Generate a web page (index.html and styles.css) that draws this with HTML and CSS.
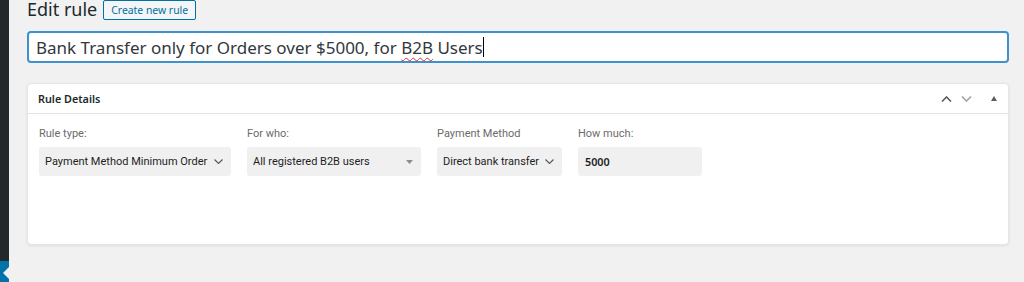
FILE: index.html
```html
<!DOCTYPE html>
<html lang="en">
<head>
    <meta charset="UTF-8">
    <title>Edit rule</title>
    <link rel="stylesheet" href="styles.css">
</head>
<body>

    <div class="adminmenu">
        <div class="menu-fill"></div>
        <div class="menu-current"></div>
    </div>

    <div class="wrap">
        <div class="page-head">
            <h1>Edit rule</h1>
            <button class="add-new">Create new rule</button>
        </div>

        <div class="title-field">Bank Transfer only for Orders over $5000, for <span class="typo">B2B</span> Users<span class="caret"></span></div>

        <!-- Rule details box -->
        <div class="postbox">
            <div class="postbox-header">
                <h2>Rule Details</h2>
                <div class="handle-actions">
                    <svg class="arrow-up" width="11" height="6" viewBox="0 0 11 6"><path d="M1 5.5 L5.5 1 L10 5.5" fill="none" stroke="currentColor" stroke-width="1.6"/></svg>
                    <svg class="arrow-down" width="11" height="6" viewBox="0 0 11 6"><path d="M1 0.5 L5.5 5 L10 0.5" fill="none" stroke="currentColor" stroke-width="1.6"/></svg>
                    <svg class="toggle" width="6" height="5" viewBox="0 0 6 5"><path d="M0 5 L3 0 L6 5 Z" fill="currentColor"/></svg>
                </div>
            </div>
            <div class="postbox-body">
                <div class="field">
                    <label>Rule type:</label>
                    <div class="select">
                        <span>Payment Method Minimum Order</span>
                        <svg class="chev" width="9" height="5" viewBox="0 0 9 5"><path d="M0.5 0.5 L4.5 4.5 L8.5 0.5" fill="none" stroke="currentColor" stroke-width="1.1"/></svg>
                    </div>
                </div>
                <div class="field">
                    <label>For who:</label>
                    <div class="select">
                        <span>All registered B2B users</span>
                        <svg class="caret-down" width="7" height="4" viewBox="0 0 7 4"><path d="M0 0 L7 0 L3.5 4 Z" fill="currentColor"/></svg>
                    </div>
                </div>
                <div class="field">
                    <label>Payment Method</label>
                    <div class="select">
                        <span>Direct bank transfer</span>
                        <svg class="chev" width="9" height="5" viewBox="0 0 9 5"><path d="M0.5 0.5 L4.5 4.5 L8.5 0.5" fill="none" stroke="currentColor" stroke-width="1.1"/></svg>
                    </div>
                </div>
                <div class="field">
                    <label>How much:</label>
                    <div class="amount">5000</div>
                </div>
            </div>
        </div>
    </div>

</body>
</html>
```

FILE: styles.css
```css
  html,
  body {
      height: 100%;
  }
  body {
      margin: 0;
      padding: 0;
      display: flex;
      background-color: #f1f1f1;
      color: #23282d;
      font-family: 'Noto Sans', sans-serif;
      overflow: hidden;
  }

  /* 左侧菜单 */
  .adminmenu {
      width: 9px;
      display: flex;
      flex-direction: column;
  }
  .menu-fill {
      flex: 1;
      background-color: #23282d;
  }
  .menu-current {
      position: relative;
      height: 21px;
      background-color: #0073aa;
  }
  .menu-current::after {
      content: "";
      position: absolute;
      right: 0;
      top: 6px;
      border-top: 6px solid transparent;
      border-bottom: 6px solid transparent;
      border-right: 6px solid #f1f1f1;
  }

  .wrap {
      flex: 1;
      padding: 0 15px 0 18px;
  }

  .page-head {
      display: flex;
      align-items: center;
      gap: 6px;
      height: 20px;
  }
  h1 {
      margin: 0;
      font-size: 18px;
      font-weight: 400;
      line-height: 20px;
      position: relative;
      top: -1px;
      color: #23282d;
  }
  .add-new {
      height: 20px;
      padding: 0 7px;
      font-family: 'Noto Sans', sans-serif;
      font-size: 10.4px;
      color: #0071a1;
      background-color: #f3f5f6;
      border: 1px solid #0071a1;
      border-radius: 2px;
      cursor: pointer;
  }

  .title-field {
      margin-top: 11px;
      height: 28px;
      display: flex;
      align-items: center;
      padding: 0 7px;
      font-size: 17px;
      color: #32373c;
      background-color: #fff;
      border: 2px solid #3d91cc;
      border-radius: 4px;
      white-space: pre;
  }
  .typo {
      text-decoration: underline wavy #e03030;
      text-decoration-thickness: 1px;
      text-underline-offset: 3px;
  }
  .caret {
      display: inline-block;
      width: 1px;
      height: 20px;
      background-color: #000;
  }

  /* Rule details */
  .postbox {
      margin-top: 20px;
      height: 160px;
      background-color: #fff;
      border: 1px solid #e5e5e5;
      border-radius: 4px;
      box-shadow: 0 1px 3px rgba(0, 0, 0, 0.08);
  }
  .postbox-header {
      height: 29px;
      display: flex;
      align-items: center;
      justify-content: space-between;
      padding: 0 11px 0 10px;
      border-bottom: 1px solid #e2e4e7;
  }
  .postbox-header h2 {
      margin: 0;
      font-size: 10.8px;
      font-weight: 600;
      color: #23282d;
  }
  .handle-actions {
      display: flex;
      align-items: center;
  }
  .arrow-up {
      color: #555d66;
  }
  .arrow-down {
      color: #a0a5aa;
      margin-left: 9px;
  }
  .toggle {
      color: #555d66;
      margin-left: 19px;
  }

  .postbox-body {
      display: grid;
      grid-template-columns: 192px 174px 125px 124px;
      column-gap: 16px;
      padding: 13px 11px 0 11px;
      font-family: 'Roboto', sans-serif;
  }
  .field label {
      display: block;
      font-size: 11px;
      color: #6b6b6b;
      margin-bottom: 7px;
  }
  .select,
  .amount {
      height: 29px;
      display: flex;
      align-items: center;
      justify-content: space-between;
      padding: 0 8px 0 6px;
      background-color: #f0f0f0;
      border-radius: 3px;
      font-size: 11px;
      color: #1e1e1e;
      white-space: nowrap;
  }
  .chev {
      color: #50575e;
      flex-shrink: 0;
  }
  .caret-down {
      color: #8c8c8c;
      flex-shrink: 0;
  }
  .amount {
      padding-left: 7px;
      font-family: 'Noto Sans', sans-serif;
      font-weight: 600;
      font-size: 10.8px;
  }
```
